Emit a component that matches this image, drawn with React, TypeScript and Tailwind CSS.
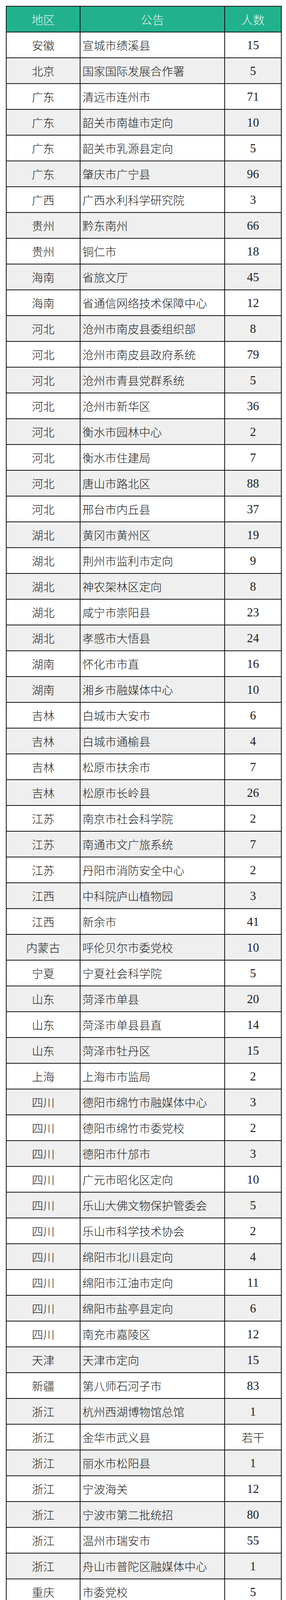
import React from "react";

const rows: [string, string, string][] = [
  ["安徽", "宣城市绩溪县", "15"],
  ["北京", "国家国际发展合作署", "5"],
  ["广东", "清远市连州市", "71"],
  ["广东", "韶关市南雄市定向", "10"],
  ["广东", "韶关市乳源县定向", "5"],
  ["广东", "肇庆市广宁县", "96"],
  ["广西", "广西水利科学研究院", "3"],
  ["贵州", "黔东南州", "66"],
  ["贵州", "铜仁市", "18"],
  ["海南", "省旅文厅", "45"],
  ["海南", "省通信网络技术保障中心", "12"],
  ["河北", "沧州市南皮县委组织部", "8"],
  ["河北", "沧州市南皮县政府系统", "79"],
  ["河北", "沧州市青县党群系统", "5"],
  ["河北", "沧州市新华区", "36"],
  ["河北", "衡水市园林中心", "2"],
  ["河北", "衡水市住建局", "7"],
  ["河北", "唐山市路北区", "88"],
  ["河北", "邢台市内丘县", "37"],
  ["湖北", "黄冈市黄州区", "19"],
  ["湖北", "荆州市监利市定向", "9"],
  ["湖北", "神农架林区定向", "8"],
  ["湖北", "咸宁市崇阳县", "23"],
  ["湖北", "孝感市大悟县", "24"],
  ["湖南", "怀化市市直", "16"],
  ["湖南", "湘乡市融媒体中心", "10"],
  ["吉林", "白城市大安市", "6"],
  ["吉林", "白城市通榆县", "4"],
  ["吉林", "松原市扶余市", "7"],
  ["吉林", "松原市长岭县", "26"],
  ["江苏", "南京市社会科学院", "2"],
  ["江苏", "南通市文广旅系统", "7"],
  ["江苏", "丹阳市消防安全中心", "2"],
  ["江西", "中科院庐山植物园", "3"],
  ["江西", "新余市", "41"],
  ["内蒙古", "呼伦贝尔市委党校", "10"],
  ["宁夏", "宁夏社会科学院", "5"],
  ["山东", "菏泽市单县", "20"],
  ["山东", "菏泽市单县县直", "14"],
  ["山东", "菏泽市牡丹区", "15"],
  ["上海", "上海市市监局", "2"],
  ["四川", "德阳市绵竹市融媒体中心", "3"],
  ["四川", "德阳市绵竹市委党校", "2"],
  ["四川", "德阳市什邡市", "3"],
  ["四川", "广元市昭化区定向", "10"],
  ["四川", "乐山大佛文物保护管委会", "5"],
  ["四川", "乐山市科学技术协会", "2"],
  ["四川", "绵阳市北川县定向", "4"],
  ["四川", "绵阳市江油市定向", "11"],
  ["四川", "绵阳市盐亭县定向", "6"],
  ["四川", "南充市嘉陵区", "12"],
  ["天津", "天津市定向", "15"],
  ["新疆", "第八师石河子市", "83"],
  ["浙江", "杭州西湖博物馆总馆", "1"],
  ["浙江", "金华市武义县", "若干"],
  ["浙江", "丽水市松阳县", "1"],
  ["浙江", "宁波海关", "12"],
  ["浙江", "宁波市第二批统招", "80"],
  ["浙江", "温州市瑞安市", "55"],
  ["浙江", "舟山市普陀区融媒体中心", "1"],
  ["重庆", "市委党校", "5"],
  ["甘肃", "甘南州", "311"],
  ["广东", "茂名市电白区", "100"],
  ["海南", "海南省公安厅", "371"],
  ["河北", "沧州市东光县", "108"],
  ["河北", "沧州市青县", "154"],
  ["河北", "河北省公安厅", "450"],
  ["河北", "唐山市迁安市", "187"],
  ["河北", "唐山市玉田县", "322"],
  ["河北", "唐山市遵化市", "252"],
  ["河北", "邢台市襄都区", "149"],
  ["河南", "驻马店市正阳县", "162"],
  ["黑龙江", "省人民检察院", "222"],
  ["黑龙江", "伊春市公安局", "433"],
  ["湖南", "邵阳市消防救援支队", "169"],
  ["湖南", "益阳市消防救援支队", "106"],
  ["吉林", "白山市", "397"],
  ["辽宁", "沈阳市消防救援支队", "160"],
  ["宁夏", "固原市公安局", "252"],
  ["宁夏", "石嘴山市公安局", "300"],
  ["宁夏", "吴忠市公安局", "248"],
  ["青海", "海西州公安局", "146"],
  ["四川", "广安市农业技术助理岗", "533"],
  ["四川", "内江市医疗卫生辅助岗", "163"],
  ["新疆", "昌吉州奇台县公安局", "144"],
];

const cjk = "font-['Noto_Sans_CJK_SC',sans-serif] font-light";
const num = "font-['Liberation_Serif',serif]";

function Row({ area, name, count, shaded }: { area: string; name: string; count: string; shaded: boolean }) {
  const bg = shaded ? "bg-[#efefef]" : "bg-white";
  const isNum = /^\d+$/.test(count);
  return (
    <div className={`grid grid-cols-[189px_370px_145px] h-[66px] leading-none ${bg}`}>
      <div className={`flex items-center justify-center border-r-2 border-b-2 border-[#111] text-[29px] text-[#1c1c1c] ${cjk}`}>
        {area}
      </div>
      <div className={`flex items-center pl-[5px] border-r-2 border-b-2 border-[#111] text-[29px] text-[#1c1c1c] ${cjk}`}>
        {name}
      </div>
      <div
        className={`flex items-center justify-center border-r-2 border-b-2 border-[#111] text-[#1c1c1c] ${
          isNum ? `text-[31px] ${num}` : `text-[29px] ${cjk}`
        }`}
      >
        {count}
      </div>
    </div>
  );
}

export default function App() {
  return (
    <div className="bg-white pt-[15px] pl-[15px] pb-[15px]">
      <div className="w-[706px] border-l-2 border-t-2 border-[#111]">
        <div className={`grid grid-cols-[189px_370px_145px] h-[66px] leading-none bg-[#21b28d] text-[30px] text-[#eef8f2] ${cjk}`}>
          <div className="flex items-center justify-center border-r-2 border-b-2 border-[#111]">地区</div>
          <div className="flex items-center justify-center border-r-2 border-b-2 border-[#111]">公告</div>
          <div className="flex items-center justify-center border-r-2 border-b-2 border-[#111]">人数</div>
        </div>
        {rows.map((r, i) => (
          <Row key={i} area={r[0]} name={r[1]} count={r[2]} shaded={i % 2 === 1} />
        ))}
      </div>
    </div>
  );
}
